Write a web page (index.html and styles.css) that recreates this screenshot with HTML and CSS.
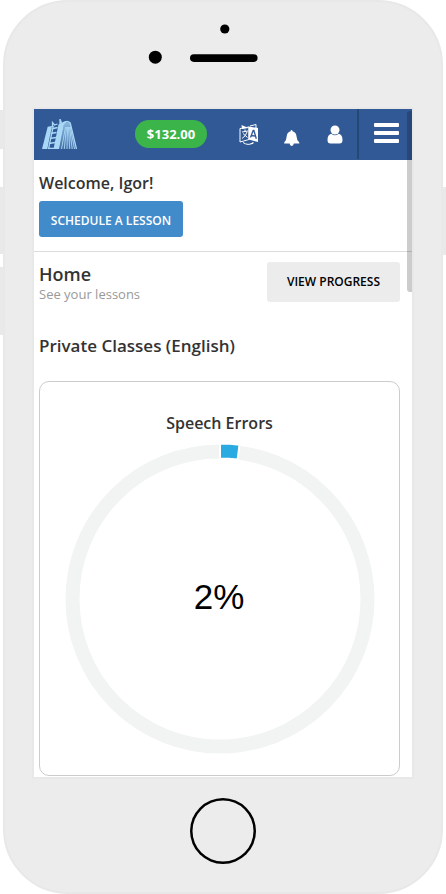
FILE: index.html
```html
<!DOCTYPE html>
<html lang="en">
<head>
<meta charset="utf-8">
<title>Home</title>
<link rel="stylesheet" href="styles.css">
</head>
<body>
<div class="phone">
  <span class="side-button mute"></span>
  <span class="side-button volume-up"></span>
  <span class="side-button volume-down"></span>
  <span class="side-button power"></span>
  <div class="phone-top">
    <svg width="436" height="107" viewBox="5 2 436 107">
      <circle cx="224.8" cy="29" r="4.6"/>
      <circle cx="155.3" cy="57.2" r="6.5"/>
      <rect x="190" y="54.3" width="67.6" height="7.6" rx="3.8"/>
    </svg>
  </div>
  <main class="screen">
    <header class="navbar">
      <svg class="logo" width="36" height="31" viewBox="0 0 36 31">
        <defs>
          <linearGradient id="fan" x1="0" y1="0" x2="0" y2="1">
            <stop offset="0" stop-color="#a9d8f6" stop-opacity=".75"/>
            <stop offset="1" stop-color="#a9d8f6" stop-opacity=".15"/>
          </linearGradient>
        </defs>
        <path fill="#a9d8f6" d="M0 30 5.700 7.700 10 7 5.300 30z"/>
        <path fill="#a9d8f6" d="M11.500 30 16.500 5.500 22 2.500 25.500 2 22 5.500 17 30z"/>
        <path fill="none" stroke="#a9d8f6" stroke-width="1.300" d="M6.500 30 11.300 7M9.500 10l6-1.500M8.500 14.500l6-1M8 19.500l6-1M7 24.500l6-1M6 29.300h6M10.500 8V3.500l2 2.500 3-1M18 5V0l1.500 4"/>
        <path fill="url(#fan)" d="M17 30 22 5q3-3 6.500-.5L34.500 30z"/>
        <path fill="none" stroke="#a9d8f6" stroke-width="1.200" d="M22 4Q25 1 28.300 4L34.500 30"/>
        <path fill="none" stroke="#a9d8f6" stroke-width=".9" d="M19.500 30 23.500 8M22.300 30 24.500 8M25 30 25.500 8M27.700 30 26.500 8M30.200 30 27.500 8M32.500 30 28.300 8"/>
      </svg>
      <span class="balance">$132.00</span>
      <svg class="translate" width="20" height="22" viewBox="0 0 20 22">
        <path fill="#fff" d="m9.500 2.500 9.500 1.500v14L9.500 15.500z"/>
        <path fill="none" stroke="#fff" stroke-width="1" d="M1 4.500 10 3v12.500L1 18z"/>
        <path fill="#fff" d="m2.500 1 7 3-6.500 1z"/>
        <path fill="none" stroke="#fff" stroke-width="1" d="M3 8 9 7M6 5.500v2M8 8q-1 4-5 6.500M4 9.500 8.500 13.500M11 2l6-1.500V4M4 18.500q5 3.500 10 .5M14 18v1.500l-2.500.2"/>
        <path fill="none" stroke="#305996" stroke-width="1.300" d="m11.500 13.500 2.700-7h.7l2.400 8.300M12.500 11.500l3.800.7"/>
      </svg>
      <svg class="bell" width="16" height="17" viewBox="0 0 16 17">
        <path fill="#fff" d="M7.500 0q1 0 1 1.200 3.700 1 4 5 .2 4.300 2.800 6.200v1.100h-5.500q-.2 2.300-2.100 2.500-1.900-.2-2.100-2.500H.2v-1.100Q2.500 10.500 2.700 6.200q.3-4 3.900-5Q6.600 0 7.500 0z"/>
      </svg>
      <svg class="user" width="16" height="19" viewBox="0 0 16 19">
        <circle cx="8" cy="5" r="4.500" fill="#fff"/>
        <path fill="#fff" d="M4.300 8.800Q8 11.800 11.700 8.800 15.500 9.500 15.500 15q0 3.500-3 3.500h-9q-3 0-3-3.500 0-5.500 3.800-6.200z"/>
      </svg>
      <span class="menu"><i></i><i></i><i></i></span>
    </header>
    <section class="welcome">
      <h2>Welcome, Igor!</h2>
      <a class="schedule">SCHEDULE A LESSON</a>
    </section>
    <section class="page-head">
      <div>
        <h1>Home</h1>
        <p>See your lessons</p>
      </div>
      <a class="progress">VIEW PROGRESS</a>
    </section>
    <h2 class="class-title">Private Classes (English)</h2>
    <section class="card">
      <h3>Speech Errors</h3>
      <svg class="chart" width="310" height="310" viewBox="-155 -155 310 310">
        <circle r="147.500" fill="none" stroke="#f2f4f4" stroke-width="14"/>
        <path fill="#29abe2" stroke="#fff" stroke-width="2" d="M0-155.500A155.500 155.500 0 0 1 19.500-154.300L17.600-139.400A140.500 140.500 0 0 0 0-140.500z"/>
        <text x="-1" y="10" text-anchor="middle">2%</text>
      </svg>
    </section>
    <span class="scrollbar"></span>
  </main>
  <div class="home-button"></div>
</div>
</body>
</html>
```
FILE: styles.css
```css
* { box-sizing: border-box; }
body { margin: 0; width: 446px; height: 894px; overflow: hidden; background: #fff; font-family: "Open Sans", sans-serif; color: #333; }
h1, h2, h3, p { margin: 0; font-weight: 600; }
svg { display: block; flex: none; }
.phone { position: relative; width: 440px; height: 894px; margin-left: 3px; border: 2px solid #e8e8e8; border-radius: 65px; background: #ececec; }
.phone-top { height: 105px; }
.side-button { position: absolute; width: 4px; background: #e9e9e9; left: -5px; }
.mute { top: 108px; height: 39px; }
.volume-up { top: 185px; height: 67px; }
.volume-down { top: 265px; height: 68px; }
.power { top: 185px; height: 68px; left: 437px; }
.screen { position: relative; width: 382px; height: 672px; margin-left: 27px; border: 2px solid #e8e8e8; background: #fff; overflow: hidden; }
.navbar { display: flex; height: 51px; background: #305996; }
.logo { margin: 10px 0 0 8px; }
.balance { width: 72px; height: 28px; margin: 11px 0 0 57px; border-radius: 14px; background: #3bb54a; color: #fff; font-size: 13px; font-weight: 700; line-height: 28px; text-align: center; flex: none; }
.translate { margin: 15px 0 0 32px; }
.bell { margin: 21px 0 0 25px; }
.user { margin: 16px 0 0 27px; }
.menu { display: flex; flex: none; flex-direction: column; gap: 4px; width: 55px; height: 50px; margin-left: 14px; padding: 14px 0 0 15px; border-left: 2px solid #264876; }
.menu i { width: 25px; height: 4px; border-radius: 1px; background: #fff; }
.welcome { height: 92px; padding: 11px 5px 0; border-bottom: 1px solid #dcdcdc; }
.welcome h2 { font-size: 16px; line-height: 24px; }
.schedule { display: block; width: 144px; height: 36px; margin-top: 6px; border-radius: 3px; background: #428bca; color: #fff; font-size: 12px; font-weight: 600; line-height: 39px; text-align: center; white-space: nowrap; }
.page-head { display: flex; justify-content: space-between; height: 82px; padding: 10px 12px 0 5px; }
.page-head h1 { font-size: 18px; line-height: 25px; }
.page-head p { margin-top: -1px; font-size: 13px; font-weight: 400; line-height: 16px; color: #999; }
.progress { width: 133px; height: 40px; border-radius: 3px; background: #ececec; color: #000; font-size: 12px; font-weight: 600; line-height: 40px; text-align: center; }
.class-title { height: 47px; padding-left: 5px; font-size: 17px; line-height: 24px; }
.card { width: 361px; height: 395px; margin-left: 5px; padding-top: 29px; border: 1px solid #ccc; border-radius: 10px; }
.card h3 { height: 33px; font-size: 16px; line-height: 25px; text-align: center; }
.chart { margin-left: 25px; overflow: visible; }
.chart text { font: 35px "Liberation Sans", sans-serif; fill: #000; }
.scrollbar { position: absolute; top: 2px; right: 0; width: 5px; height: 181px; border-radius: 3px 0 0 3px; background: rgba(0, 0, 0, .2); }
.home-button { width: 66px; height: 66px; margin: 19px 0 0 185px; border-radius: 50%; box-shadow: inset 0 0 0 2.500px #000; }
```
